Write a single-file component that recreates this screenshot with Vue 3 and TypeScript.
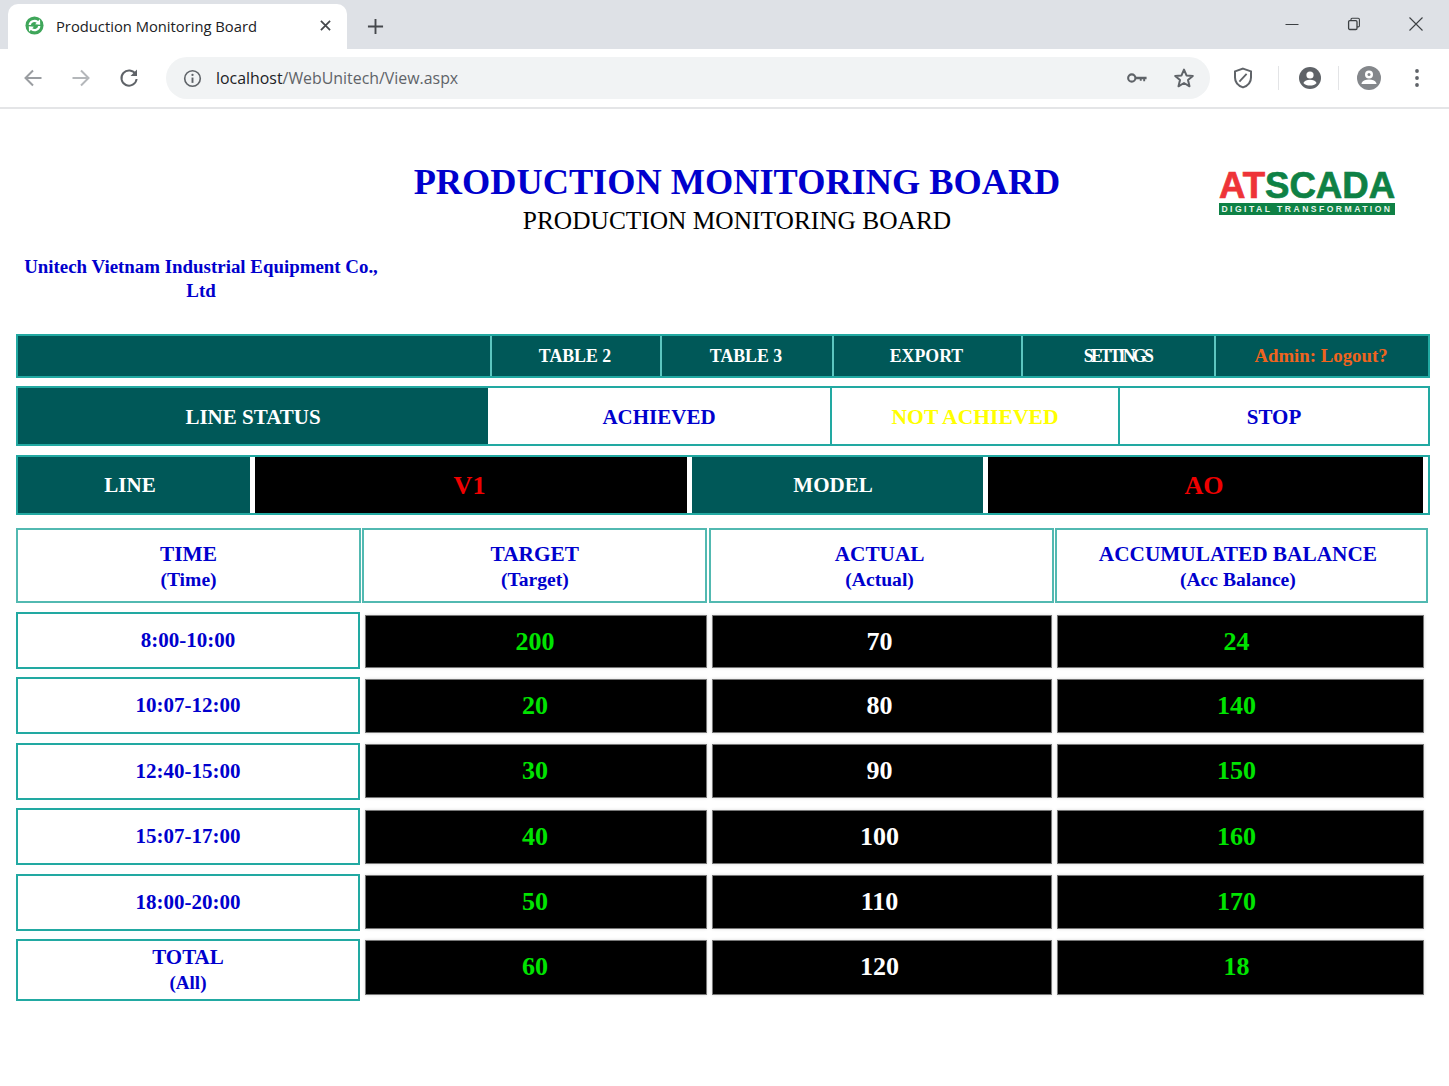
<template>
  <div class="browser">
    <!-- tab strip -->
    <div class="tabstrip">
      <div class="tab">
        <svg class="favicon" viewBox="0 0 20 20" aria-hidden="true">
          <circle cx="10" cy="10" r="9.5" fill="#3fa65a" />
          <path d="M3.8 9.6A6.2 6.2 0 0 1 13.8 5.2L15.8 3.4 16 9.2 10.6 8.7 12.3 7.1A3.8 3.8 0 0 0 6.2 9.6Z" fill="#fff" />
          <path d="M16.2 10.4A6.2 6.2 0 0 1 6.2 14.8L4.2 16.6 4 10.8 9.4 11.3 7.7 12.9A3.8 3.8 0 0 0 13.8 10.4Z" fill="#fff" />
        </svg>
        <span class="tab-title">Production Monitoring Board</span>
        <svg class="tab-close" viewBox="0 0 12 12" aria-hidden="true">
          <path d="M1 1L11 11M11 1L1 11" stroke="#45484c" stroke-width="1.9" fill="none" />
        </svg>
      </div>
      <svg class="new-tab" viewBox="0 0 18 18" aria-hidden="true">
        <path d="M9 1V17M1 9H17" stroke="#45484c" stroke-width="2" fill="none" />
      </svg>
      <div class="win-controls">
        <svg viewBox="0 0 14 14" aria-hidden="true"><path d="M0.5 7.5H13.5" stroke="#3c4043" stroke-width="1" fill="none" /></svg>
        <svg viewBox="0 0 14 14" aria-hidden="true">
          <path d="M4 3.5V2.2Q4 1.2 5 1.2H11.2Q12.4 1.2 12.4 2.4V8.8Q12.4 9.9 11.3 9.9H10" stroke="#3c4043" stroke-width="1.1" fill="none" />
          <rect x="1.6" y="3.6" width="8.4" height="8.9" rx="1.2" stroke="#3c4043" stroke-width="1.3" fill="none" />
        </svg>
        <svg viewBox="0 0 14 14" aria-hidden="true"><path d="M0.5 0.5L13.5 13.5M13.5 0.5L0.5 13.5" stroke="#3c4043" stroke-width="1.1" fill="none" /></svg>
      </div>
    </div>

    <!-- toolbar -->
    <div class="toolbar">
      <svg class="nav-ico" viewBox="0 0 20 20" aria-hidden="true"><path d="M18.5 10H2.5M10 2.5L2.5 10L10 17.5" stroke="#9a9da1" stroke-width="2" fill="none" /></svg>
      <svg class="nav-ico" viewBox="0 0 20 20" aria-hidden="true"><path d="M1.5 10H17.5M10 2.5L17.5 10L10 17.5" stroke="#b4b7ba" stroke-width="2" fill="none" /></svg>
      <svg class="nav-ico" viewBox="0 0 20 20" aria-hidden="true">
        <path d="M16.6 6.2A7.6 7.6 0 1 0 17.6 11" stroke="#5f6368" stroke-width="2" fill="none" />
        <path d="M18 1.5V8H11.5Z" fill="#5f6368" />
      </svg>
      <div class="omnibox">
        <svg class="info-ico" viewBox="0 0 20 20" aria-hidden="true">
          <circle cx="10" cy="10" r="8.2" stroke="#5f6368" stroke-width="1.7" fill="none" />
          <path d="M10 9V14.6" stroke="#5f6368" stroke-width="2" />
          <circle cx="10" cy="6.2" r="1.2" fill="#5f6368" />
        </svg>
        <span class="url"><span class="host">localhost</span>/WebUnitech/View.aspx</span>
        <svg class="key-ico" viewBox="0 0 22 12" aria-hidden="true">
          <circle cx="5" cy="6" r="3.8" stroke="#5f6368" stroke-width="2.2" fill="none" />
          <path d="M8.5 4.8H20.5V7.2H19V9.4H17V7.2H15.4V8.8H13.4V7.2H8.5Z" fill="#5f6368" />
        </svg>
        <svg class="star-ico" viewBox="0 0 22 22" aria-hidden="true">
          <path d="M11 2.6L13.5 8.4L19.8 9L15 13.1L16.5 19.3L11 16L5.5 19.3L7 13.1L2.2 9L8.5 8.4Z" stroke="#5f6368" stroke-width="2" stroke-linejoin="round" fill="none" />
        </svg>
      </div>
      <div class="extensions">
        <svg class="shield" viewBox="0 0 20 22" aria-hidden="true">
          <path d="M10 1.6L18 4.4V10.5C18 15.2 14.6 18.8 10 20.4C5.4 18.8 2 15.2 2 10.5V4.4Z" stroke="#5f6368" stroke-width="2" fill="none" />
          <path d="M13.6 6.8L6.4 14.6" stroke="#5f6368" stroke-width="1.8" />
        </svg>
        <i class="sep"></i>
        <svg class="avatar first" viewBox="0 0 22 22" aria-hidden="true">
          <circle cx="11" cy="11" r="11" fill="#5f6368" />
          <circle cx="11" cy="8" r="3.6" fill="#fff" />
          <path d="M4.4 16C5.6 13.6 8 12.8 11 12.8S16.4 13.6 17.6 16C16 17.8 13.6 18.6 11 18.6S6 17.8 4.4 16Z" fill="#fff" />
        </svg>
        <i class="sep second-sep"></i>
        <svg class="avatar second" viewBox="0 0 24 24" aria-hidden="true">
          <circle cx="12" cy="12" r="12" fill="#84878b" />
          <circle cx="12" cy="8.6" r="4" fill="#fff" />
          <circle cx="12" cy="8.6" r="1.5" fill="#84878b" />
          <path d="M4.6 17C6 14.4 8.8 13.6 12 13.6S18 14.4 19.4 17V18H4.6Z" fill="#fff" />
        </svg>
        <svg class="menu" viewBox="0 0 4 20" aria-hidden="true">
          <circle cx="2" cy="3" r="1.9" fill="#5f6368" />
          <circle cx="2" cy="10" r="1.9" fill="#5f6368" />
          <circle cx="2" cy="17" r="1.9" fill="#5f6368" />
        </svg>
      </div>
    </div>

    <!-- page -->
    <main class="page">
      <header class="board-head">
        <div class="titles">
          <h1>PRODUCTION MONITORING BOARD</h1>
          <h2>PRODUCTION MONITORING BOARD</h2>
        </div>
        <div class="logo">
          <div class="logo-word"><span class="red">AT</span><span class="green">SCADA</span></div>
          <div class="logo-tag">DIGITAL TRANSFORMATION</div>
        </div>
        <div class="company">Unitech Vietnam Industrial Equipment Co., Ltd</div>
      </header>

      <nav class="menu-bar">
        <span></span>
        <a v-for="item in menuItems" :key="item" :class="{ squeezed: item === 'SETTINGS' }">{{ item }}</a>
        <a class="logout">Admin: Logout?</a>
      </nav>

      <section class="status-bar">
        <div class="status-label">LINE STATUS</div>
        <div class="status achieved">ACHIEVED</div>
        <div class="status not-achieved">NOT ACHIEVED</div>
        <div class="status stop">STOP</div>
      </section>

      <section class="line-bar">
        <div class="line-label first">LINE</div>
        <div class="line-value v1">V1</div>
        <div class="line-label second">MODEL</div>
        <div class="line-value v2">AO</div>
      </section>

      <section class="table-head">
        <div v-for="col in columns" :key="col.title" class="th">
          <span>{{ col.title }}</span>
          <small>({{ col.sub }})</small>
        </div>
      </section>

      <section class="rows">
        <div v-for="row in rows" :key="row.time" class="row">
          <div class="time">{{ row.time }}</div>
          <div class="cell target">{{ row.target }}</div>
          <div class="cell actual">{{ row.actual }}</div>
          <div class="cell balance">{{ row.balance }}</div>
        </div>
        <div class="row total">
          <div class="time">
            <span>TOTAL</span>
            <small>(All)</small>
          </div>
          <div class="cell target">60</div>
          <div class="cell actual">120</div>
          <div class="cell balance">18</div>
        </div>
      </section>
    </main>
  </div>
</template>

<script setup lang="ts">
interface Column {
  title: string
  sub: string
}

interface Row {
  time: string
  target: number
  actual: number
  balance: number
}

const menuItems: string[] = ['TABLE 2', 'TABLE 3', 'EXPORT', 'SETTINGS']

const columns: Column[] = [
  { title: 'TIME', sub: 'Time' },
  { title: 'TARGET', sub: 'Target' },
  { title: 'ACTUAL', sub: 'Actual' },
  { title: 'ACCUMULATED BALANCE', sub: 'Acc Balance' }
]

const rows: Row[] = [
  { time: '8:00-10:00', target: 200, actual: 70, balance: 24 },
  { time: '10:07-12:00', target: 20, actual: 80, balance: 140 },
  { time: '12:40-15:00', target: 30, actual: 90, balance: 150 },
  { time: '15:07-17:00', target: 40, actual: 100, balance: 160 },
  { time: '18:00-20:00', target: 50, actual: 110, balance: 170 }
]
</script>

<style>
html,
body {
  margin: 0;
  background: #fff;
}
</style>

<style scoped>
*,
*::before,
*::after {
  box-sizing: border-box;
}

.browser {
  width: 1449px;
  height: 1086px;
  overflow: hidden;
  background: #fff;
  font-family: "Liberation Serif", "Times New Roman", serif;
}

/* browser chrome */
.tabstrip {
  height: 49px;
  background: #dee1e6;
  display: flex;
  align-items: flex-end;
  padding-left: 8px;
}
.tab {
  width: 339px;
  height: 45px;
  background: #fff;
  border-radius: 10px 10px 0 0;
  display: flex;
  align-items: center;
  padding: 0 16px 2px 17px;
  font-family: "Open Sans", "Noto Sans", sans-serif;
}
.favicon {
  width: 19px;
  height: 19px;
}
.tab-title {
  margin-left: 12px;
  font-size: 14.75px;
  color: #202124;
  white-space: nowrap;
}
.tab-close {
  width: 11px;
  height: 11px;
  margin-left: auto;
}
.new-tab {
  width: 17px;
  height: 17px;
  margin: 0 0 14px 20px;
}
.win-controls {
  margin-left: auto;
  align-self: flex-start;
  display: flex;
  gap: 48px;
  padding: 17px 26px 0 0;
}
.win-controls svg {
  width: 14px;
  height: 14px;
}

.toolbar {
  height: 60px;
  background: #fff;
  border-bottom: 2px solid #e4e5e7;
  display: flex;
  align-items: center;
  padding: 0 0 0 23px;
}
.nav-ico {
  width: 20px;
  height: 20px;
  margin-right: 28px;
}
.omnibox {
  width: 1044px;
  height: 42px;
  margin-left: -1px;
  border-radius: 21px;
  background: #f1f3f4;
  display: flex;
  align-items: center;
  padding: 0 15px 0 17px;
}
.info-ico {
  width: 19px;
  height: 19px;
}
.url {
  margin-left: 14px;
  font-family: "Open Sans", "Noto Sans", sans-serif;
  font-size: 15.9px;
  color: #5f6368;
}
.host {
  color: #202124;
}
.key-ico {
  width: 21px;
  height: 12px;
  margin-left: auto;
}
.star-ico {
  width: 22px;
  height: 22px;
  margin-left: 25px;
}
.extensions {
  display: flex;
  align-items: center;
  margin-left: 23px;
}
.shield {
  width: 20px;
  height: 22px;
}
.sep {
  width: 1px;
  height: 24px;
  background: #e3e4e6;
  margin: 0 20px 0 25px;
}
.sep.second-sep {
  margin: 0 18px 0 17px;
}
.avatar.first {
  width: 22px;
  height: 22px;
}
.avatar.second {
  width: 24px;
  height: 24px;
}
.menu {
  width: 4px;
  height: 20px;
  margin-left: 34px;
}

/* page content */
.page {
  padding: 0 19px 0 16px;
}

.board-head {
  height: 225px;
  display: grid;
  grid-template-columns: 370px 702px 1fr;
  grid-template-rows: 137px 1fr;
}
.titles {
  grid-column: 2;
  text-align: center;
  padding-top: 52px;
}
h1 {
  margin: 0;
  font-size: 36.3px;
  line-height: 43px;
  font-weight: 700;
  color: #0000cd;
  white-space: nowrap;
}
h2 {
  margin: 0;
  font-size: 25.4px;
  line-height: 32px;
  font-weight: 400;
  color: #000;
  white-space: nowrap;
}
.logo {
  grid-column: 3;
  padding: 60px 0 0 131px;
  font-family: "Liberation Sans", Arial, sans-serif;
}
.logo-word {
  font-size: 36.6px;
  line-height: 34px;
  font-weight: 700;
  white-space: nowrap;
  -webkit-text-stroke: 0.7px currentColor;
}
.red {
  color: #ee3338;
}
.green {
  color: #0e8145;
}
.logo-tag {
  width: 176px;
  height: 12px;
  background: #0e8145;
  color: #e8f4ec;
  font-size: 8.6px;
  font-weight: 700;
  line-height: 12px;
  letter-spacing: 2.46px;
  text-align: center;
  white-space: nowrap;
}
.company {
  grid-column: 1;
  grid-row: 2;
  align-self: start;
  padding-top: 9px;
  text-align: center;
  font-size: 18.9px;
  line-height: 24px;
  font-weight: 700;
  color: #0000cd;
}

.menu-bar {
  height: 44px;
  display: grid;
  grid-template-columns: 472px 170px 172px 189px 193px 1fr;
  background: #005858;
  border: 2px solid #22a9a2;
  font-size: 17.8px;
  font-weight: 700;
  color: #fff;
}
.menu-bar a {
  display: flex;
  align-items: center;
  justify-content: center;
  padding-right: 2px;
  border-left: 2px solid #5cc6c0;
}
.menu-bar a.squeezed {
  letter-spacing: -2.7px;
}
.menu-bar a.logout {
  color: #f0641e;
  font-size: 18.8px;
  padding-right: 2px;
}

.status-bar {
  height: 60px;
  margin-top: 8px;
  display: grid;
  grid-template-columns: 470px 342px 288px 1fr;
  border: 2px solid #22a9a2;
  font-size: 21px;
  font-weight: 700;
}
.status-bar > div {
  display: flex;
  align-items: center;
  justify-content: center;
  padding-top: 2px;
}
.status-label {
  background: #005858;
  color: #fff;
}
.status {
  background: #fff;
}
.status.not-achieved,
.status.stop {
  border-left: 2px solid #22a9a2;
}
.achieved,
.stop {
  color: #0000cd;
}
.not-achieved {
  color: #ffff00;
  font-size: 21.6px;
}

.line-bar {
  height: 60px;
  margin-top: 9px;
  display: grid;
  grid-template-columns: 232px 442px 291px 1fr;
  background: #fff;
  border: 2px solid #22a9a2;
  font-weight: 700;
}
.line-bar > div {
  display: flex;
  align-items: center;
  justify-content: center;
}
.line-label {
  background: #005858;
  color: #fff;
  font-size: 21px;
}
.line-label.first {
  padding-right: 8px;
}
.line-label.second {
  padding-right: 9px;
}
.line-value {
  background: #000;
  color: #f00000;
  font-size: 26px;
  padding: 2px 3px 0 0;
}
.v1 {
  margin: 0 5px;
}
.v2 {
  margin: 0 5px;
}

.table-head {
  margin-top: 13px;
  width: 1412px;
  height: 75px;
  display: grid;
  grid-template-columns: 345px 345px 345px 373px;
  column-gap: 1.3px;
}
.th {
  display: flex;
  flex-direction: column;
  align-items: center;
  justify-content: center;
  padding-top: 1px;
  border: 2px solid #52b9b1;
  color: #0000cd;
  font-weight: 700;
  font-size: 21.3px;
  line-height: 26px;
}
.th:nth-child(3) {
  padding-right: 3px;
}
.th:last-child {
  padding-right: 7px;
}
.th small {
  font-size: 19.6px;
  line-height: 25px;
}
.time small {
  font-size: 19px;
  line-height: 25px;
}

.rows {
  margin-top: 9px;
  display: flex;
  flex-direction: column;
  gap: 8.4px;
}
.row {
  width: 1408px;
  height: 57px;
  display: grid;
  grid-template-columns: 344px 342px 340px 1fr;
  column-gap: 5px;
  align-items: start;
}
.row .time {
  height: 57px;
  border: 2px solid #22a9a2;
  color: #0000cd;
  font-weight: 700;
  font-size: 21px;
  display: flex;
  flex-direction: column;
  align-items: center;
  justify-content: center;
}
.row.total {
  height: 62px;
}
.row.total .time {
  height: 62px;
  font-size: 21px;
  line-height: 25px;
}
.row.total .cell {
  height: 55px;
  margin-top: 1px;
}
.row:first-child .cell {
  height: 53px;
  margin-top: 3px;
}
.cell {
  height: 54px;
  margin-top: 1.5px;
  background: #000;
  border: 1px solid #777;
  box-shadow: 0 0 3px rgba(0, 0, 0, 0.15);
  display: flex;
  align-items: center;
  justify-content: center;
  font-size: 26px;
  font-weight: 700;
}
.target,
.balance {
  color: #00e400;
}
.target {
  padding-right: 2px;
}
.actual {
  color: #fff;
  padding-right: 5px;
}
.balance {
  padding-right: 8px;
}
</style>
